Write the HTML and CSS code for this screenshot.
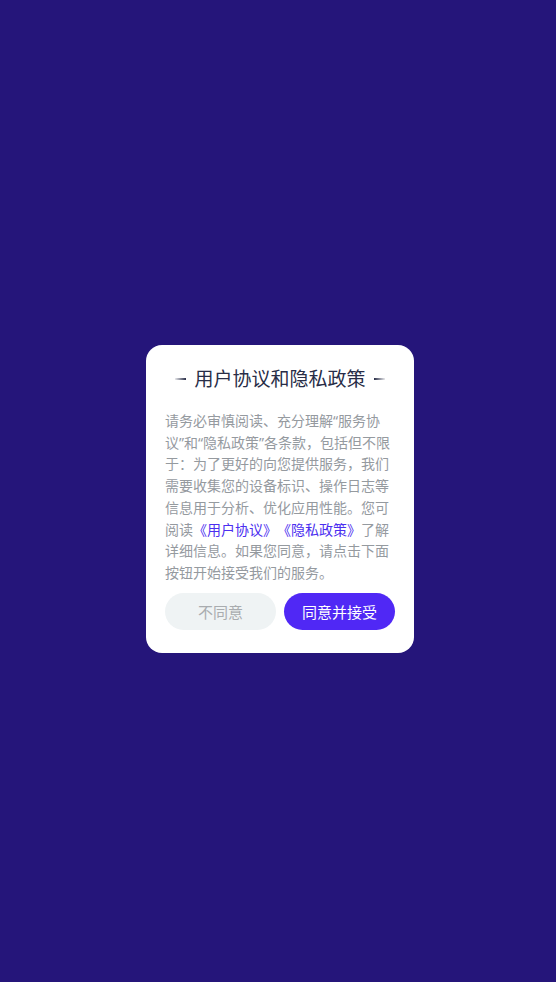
FILE: index.html
```html
<!DOCTYPE html>
<html lang="zh-CN">
<head>
<meta charset="utf-8">
<title>用户协议和隐私政策</title>
<link rel="stylesheet" href="styles.css">
</head>
<body>
<div class="page">
  <div class="dialog">
    <div class="title-row">
      <span class="dash dash-left"></span>
      <h1 class="title">用户协议和隐私政策</h1>
      <span class="dash dash-right"></span>
    </div>
    <p class="content">请务必审慎阅读、充分理解“服务协议”和“隐私政策”各条款，包括但不限于：为了更好的向您提供服务，我们需要收集您的设备标识、操作日志等信息用于分析、优化应用性能。您可阅读<a class="link" href="#">《用户协议》</a><a class="link" href="#">《隐私政策》</a>了解详细信息。如果您同意，请点击下面按钮开始接受我们的服务。</p>
    <div class="actions">
      <button class="btn btn-cancel">不同意</button>
      <button class="btn btn-ok">同意并接受</button>
    </div>
  </div>
</div>
</body>
</html>
```

FILE: styles.css
```css
html, body {
  margin: 0;
  padding: 0;
}
body {
  background: #25157a;
  font-family: "Noto Sans", "Noto Sans CJK SC", sans-serif;
}
.page {
  min-height: 982px;
  display: flex;
  justify-content: center;
  align-items: flex-start;
  padding: 345px 0 0 4px;
  box-sizing: border-box;
}
.dialog {
  width: 268px;
  box-sizing: border-box;
  background: #ffffff;
  border-radius: 16px;
  padding: 22px 19px 23px;
}
.title-row {
  display: flex;
  align-items: center;
  justify-content: center;
  height: 24px;
}
.title {
  margin: 0;
  font-size: 19px;
  font-weight: 400;
  line-height: 24px;
  color: #282d47;
}
.dash {
  width: 11px;
  height: 2px;
  margin: 0 8px;
}
.dash-left {
  background: linear-gradient(to right, rgba(40, 45, 71, 0.1), #282d47);
}
.dash-right {
  background: linear-gradient(to left, rgba(40, 45, 71, 0.1), #282d47);
}
.content {
  margin: 19px 0 0;
  font-size: 14px;
  line-height: 21.7px;
  color: #959a9f;
  text-align: left;
  text-spacing-trim: space-all;
}
.link {
  color: #4b2ef0;
  text-decoration: none;
}
.actions {
  display: flex;
  gap: 8px;
  margin-top: 9px;
}
.btn {
  flex: 1;
  height: 37px;
  border: none;
  border-radius: 19px;
  font-family: inherit;
  font-size: 15px;
  padding: 0;
}
.btn-cancel {
  background: #eff3f4;
  color: #a9acaf;
}
.btn-ok {
  background: #5028f5;
  color: #ffffff;
}
```
